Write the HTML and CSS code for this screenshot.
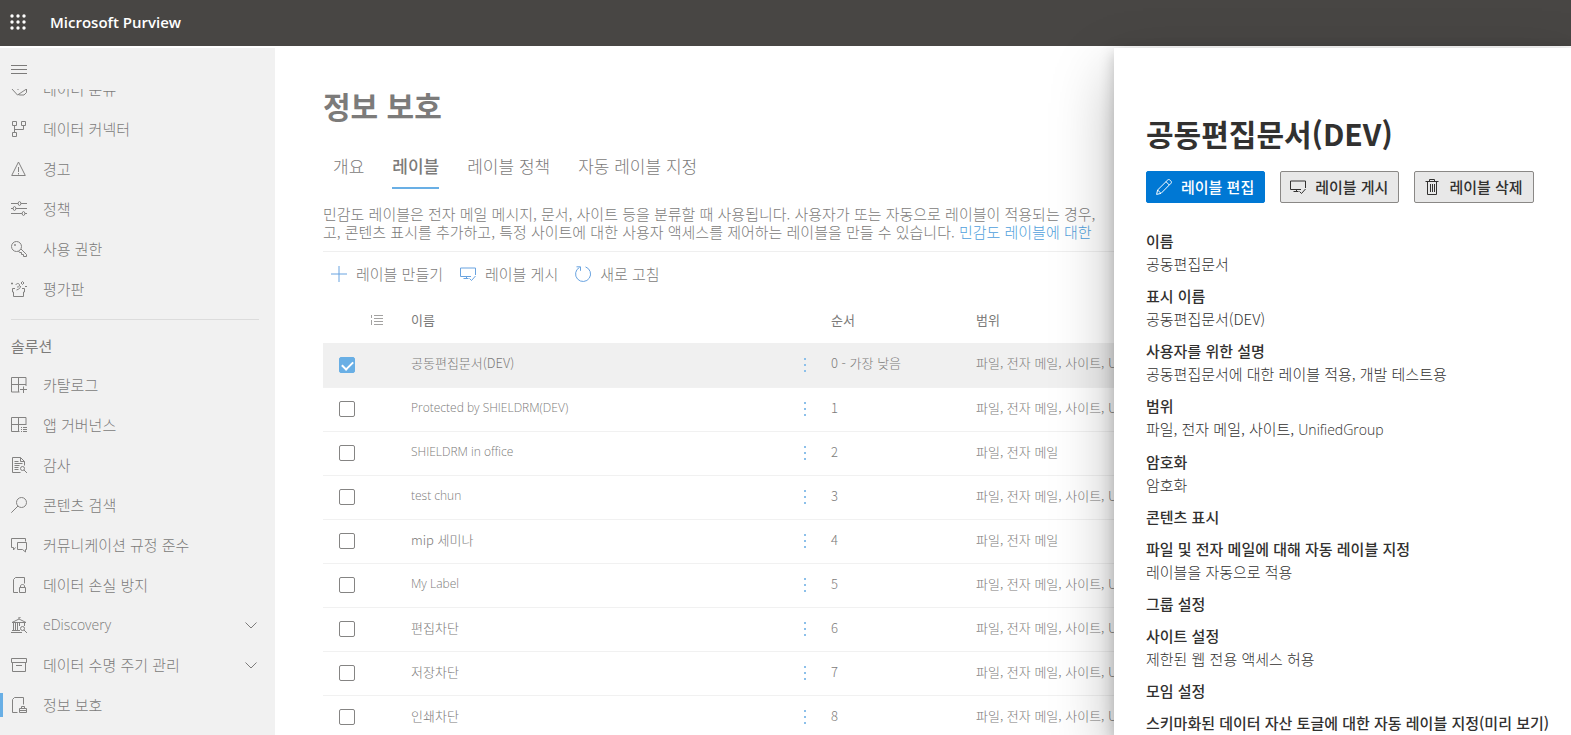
FILE: index.html
```html
<!DOCTYPE html>
<html lang="ko">
<head>
<meta charset="utf-8">
<title>정보 보호 - Microsoft Purview</title>
<link rel="stylesheet" href="styles.css">
</head>
<body>
<svg class="sprite" aria-hidden="true">
  <symbol id="i-publish" viewBox="0 0 16 16"><path d="M11 10.500H.5v-8.500h15v7M3.500 12.500h5M6.500 10.500v2M9.500 12.500l2 2 4-4.500"/></symbol>
  <symbol id="i-chevron" viewBox="0 0 12 12"><path d="M.5 3.500 6 9l5.500-5.500"/></symbol>
  <symbol id="i-list" viewBox="0 0 12 12"><path d="M3 1.500h9M3 4.500h9M3 7.500h9M3 10.500h9M.5 1v3M.5 6v5"/></symbol>
</svg>
<header class="topbar">
  <button class="waffle" type="button" aria-label="앱 시작 관리자">
    <svg viewBox="0 0 16 16"><g fill="#fff"><circle cx="2" cy="2" r="1.700"/><circle cx="8" cy="2" r="1.700"/><circle cx="14" cy="2" r="1.700"/><circle cx="2" cy="8" r="1.700"/><circle cx="8" cy="8" r="1.700"/><circle cx="14" cy="8" r="1.700"/><circle cx="2" cy="14" r="1.700"/><circle cx="8" cy="14" r="1.700"/><circle cx="14" cy="14" r="1.700"/></g></svg>
  </button>
  <span class="brand">Microsoft Purview</span>
</header>
<div class="shell">
  <nav class="sidebar">
    <button class="menu" type="button" aria-label="탐색 메뉴">
      <svg class="icon" viewBox="0 0 16 16"><path d="M0 3.500h16M0 7.500h16M0 11.500h16"/></svg>
    </button>
    <div class="nav-scroll">
      <ul class="nav-list nav-list-top">
        <li><a class="nav-item" href="#"><svg class="icon" viewBox="0 0 16 16"><path d="M.5 7.500 1 5l3-3h4l3 3M.5 7.500 6.500 14 15.500 8V3h-3L6.500 9M7 13.500l2 .5h4l2.500-2.500V7"/></svg><span>데이터 분류</span></a></li>
        <li><a class="nav-item" href="#"><svg class="icon" viewBox="0 0 16 16"><path d="M1.500.5h4v4h-4zM10.500.5h4v4h-4zM1.500 11.500h4v4h-4zM3.500 4.500v7M3.500 8.500h9v-4"/></svg><span>데이터 커넥터</span></a></li>
        <li><a class="nav-item" href="#"><svg class="icon" viewBox="0 0 16 16"><path d="M7.500 1 .7 14.500h13.600zM7.500 6v5M7.500 12v1.500"/></svg><span>경고</span></a></li>
        <li><a class="nav-item" href="#"><svg class="icon" viewBox="0 0 16 16"><path d="M0 2.500h7M10 2.500h6M0 7.500h2M5 7.500h11M0 12.500h11M14 12.500h2"/><ellipse cx="8.500" cy="2.500" rx="1.300" ry="2"/><ellipse cx="3.500" cy="7.500" rx="1.300" ry="2"/><ellipse cx="12.500" cy="12.500" rx="1.300" ry="2"/></svg><span>정책</span></a></li>
        <li><a class="nav-item" href="#"><svg class="icon" viewBox="0 0 16 16"><circle cx="5.500" cy="5.500" r="5"/><circle cx="4" cy="4" r=".6"/><path d="m10 8 5.500 5.500v2h-3v-2h-2v-2H8.500l-1-1.500"/></svg><span>사용 권한</span></a></li>
        <li><a class="nav-item" href="#"><svg class="icon" viewBox="0 0 16 16"><path d="M4 7.500H1.500V11h1v4.500h10V11h1V7.500H11M5.500 9c3-1 4-2 4-4M5 4c0-2 3.500-2 3.500 0S7 6 6 6M0 2.500h2M1 1.500v2M11.500 .5 13 2l-1.500 1.500L10 2zM14 5.500h2"/></svg><span>평가판</span></a></li>
      </ul>
      <hr class="nav-rule">
      <h2 class="nav-heading">솔루션</h2>
      <ul class="nav-list">
        <li><a class="nav-item" href="#"><svg class="icon" viewBox="0 0 16 16"><path d="M8.500 15H.5V.5h14.500v8.500M7.500.5V15M.5 7.500H15M12.500 9.500V16M9 12.500h7"/></svg><span>카탈로그</span></a></li>
        <li><a class="nav-item" href="#"><svg class="icon" viewBox="0 0 16 16"><path d="M8.500 14.500H.5V.5h14.500V8M7.500.5v14M.5 7.500H15M10 10.500h1M12 10.500h4M10 12.500h1M12 12.500h4M10 14.500h1M12 14.500h4"/></svg><span>앱 거버넌스</span></a></li>
        <li><a class="nav-item" href="#"><svg class="icon" viewBox="0 0 16 16"><path d="M9.500 15.500h-8V.5h8l4 4v4M9.500.5v4h4M3.500 4.500h4M3.500 6.500h8M3.500 8.500h5M3.500 10.500h4M3.500 12.500h4M13 13l3 3"/><circle cx="11.500" cy="11.500" r="2"/></svg><span>감사</span></a></li>
        <li><a class="nav-item" href="#"><svg class="icon" viewBox="0 0 16 16"><circle cx="10.500" cy="5.500" r="5"/><path d="M7 9 .3 15.700"/></svg><span>콘텐츠 검색</span></a></li>
        <li><a class="nav-item" href="#"><svg class="icon" viewBox="0 0 16 16"><path d="M4.500 10.500 2.500 13v-2.500H.5v-9h14v3M6.500 5.500h9v7h-1v2.500l-3-2.500h-5z"/></svg><span>커뮤니케이션 규정 준수</span></a></li>
        <li><a class="nav-item" href="#"><svg class="icon" viewBox="0 0 16 16"><path d="M7 15.500H2.500V2.500l2-2h9v6M8.500 10.500h6v5h-6zM9.500 10.500V9c0-2 4-2 4 0v1.500"/></svg><span>데이터 손실 방지</span></a></li>
        <li><a class="nav-item" href="#"><svg class="icon" viewBox="0 0 16 16"><path d="M1 5.500 8 2l7 3.500zM8 2V0h2M0 15.500h11M1 13.500h8M2.500 6v7M4.500 6v7M6.500 6v7M8.500 6v3M13.500 6v3M13 13l3 3"/><circle cx="11.500" cy="11.500" r="2"/></svg><span class="latin-nav">eDiscovery</span><svg class="chevron"><use href="#i-chevron"/></svg></a></li>
        <li><a class="nav-item" href="#"><svg class="icon" viewBox="0 0 16 16"><path d="M.5 1.500h15v4H.5zM1.500 5.500v9h13v-9M5 8.500h6"/></svg><span>데이터 수명 주기 관리</span><svg class="chevron"><use href="#i-chevron"/></svg></a></li>
        <li><a class="nav-item active" href="#" aria-current="page"><svg class="icon" viewBox="0 0 16 16"><path d="M6.500 15.500h-5v-13l2-2h9v7M8.500 11.500h7v4h-7zM10.500 11.500v-2h3v2M8.500 13.500h7"/></svg><span>정보 보호</span></a></li>
      </ul>
    </div>
  </nav>
  <main class="main">
    <h1 class="page-title">정보 보호</h1>
    <div class="tabs" role="tablist">
      <button class="tab" type="button" role="tab">개요</button>
      <button class="tab selected" type="button" role="tab" aria-selected="true">레이블</button>
      <button class="tab" type="button" role="tab">레이블 정책</button>
      <button class="tab" type="button" role="tab">자동 레이블 지정</button>
    </div>
    <p class="intro">민감도 레이블은 전자 메일 메시지, 문서, 사이트 등을 분류할 때 사용됩니다. 사용자가 또는 자동으로 레이블이 적용되는 경우,<br>고, 콘텐츠 표시를 추가하고, 특정 사이트에 대한 사용자 액세스를 제어하는 레이블을 만들 수 있습니다. <a href="#">민감도 레이블에 대한</a></p>
    <div class="commands">
      <button class="command" type="button"><svg class="icon" viewBox="0 0 16 16"><path d="M8 0v16M0 8h16"/></svg><span>레이블 만들기</span></button>
      <button class="command" type="button"><svg class="icon"><use href="#i-publish"/></svg><span>레이블 게시</span></button>
      <button class="command" type="button"><svg class="icon" viewBox="0 0 16 16"><path d="M10.500.9a7.500 7.500 0 1 1-6 .5M1.500.8h4v4"/></svg><span>새로 고침</span></button>
    </div>
    <table class="labels">
      <colgroup><col class="c-check"><col class="c-icon"><col><col class="c-more"><col class="c-order"><col class="c-scope"></colgroup>
      <thead><tr><th></th><th><svg class="list-icon"><use href="#i-list"/></svg></th><th>이름</th><th></th><th>순서</th><th>범위</th></tr></thead>
      <tbody>
        <tr class="picked"><td><input type="checkbox" checked aria-label="공동편집문서(DEV) 선택"></td><td></td><td>공동편집문서(DEV)</td><td><button class="more" type="button" aria-label="추가 작업"><i></i><i></i><i></i></button></td><td>0 - 가장 낮음</td><td>파일, 전자 메일, 사이트, UnifiedGroup</td></tr>
        <tr><td><input type="checkbox" aria-label="Protected by SHIELDRM(DEV) 선택"></td><td></td><td class="latin">Protected by SHIELDRM(DEV)</td><td><button class="more" type="button" aria-label="추가 작업"><i></i><i></i><i></i></button></td><td>1</td><td>파일, 전자 메일, 사이트, UnifiedGroup</td></tr>
        <tr><td><input type="checkbox" aria-label="SHIELDRM in office 선택"></td><td></td><td class="latin">SHIELDRM in office</td><td><button class="more" type="button" aria-label="추가 작업"><i></i><i></i><i></i></button></td><td>2</td><td>파일, 전자 메일</td></tr>
        <tr><td><input type="checkbox" aria-label="test chun 선택"></td><td></td><td class="latin">test chun</td><td><button class="more" type="button" aria-label="추가 작업"><i></i><i></i><i></i></button></td><td>3</td><td>파일, 전자 메일, 사이트, UnifiedGroup</td></tr>
        <tr><td><input type="checkbox" aria-label="mip 세미나 선택"></td><td></td><td>mip 세미나</td><td><button class="more" type="button" aria-label="추가 작업"><i></i><i></i><i></i></button></td><td>4</td><td>파일, 전자 메일</td></tr>
        <tr><td><input type="checkbox" aria-label="My Label 선택"></td><td></td><td class="latin">My Label</td><td><button class="more" type="button" aria-label="추가 작업"><i></i><i></i><i></i></button></td><td>5</td><td>파일, 전자 메일, 사이트, UnifiedGroup</td></tr>
        <tr><td><input type="checkbox" aria-label="편집차단 선택"></td><td></td><td>편집차단</td><td><button class="more" type="button" aria-label="추가 작업"><i></i><i></i><i></i></button></td><td>6</td><td>파일, 전자 메일, 사이트, UnifiedGroup</td></tr>
        <tr><td><input type="checkbox" aria-label="저장차단 선택"></td><td></td><td>저장차단</td><td><button class="more" type="button" aria-label="추가 작업"><i></i><i></i><i></i></button></td><td>7</td><td>파일, 전자 메일, 사이트, UnifiedGroup</td></tr>
        <tr><td><input type="checkbox" aria-label="인쇄차단 선택"></td><td></td><td>인쇄차단</td><td><button class="more" type="button" aria-label="추가 작업"><i></i><i></i><i></i></button></td><td>8</td><td>파일, 전자 메일, 사이트, UnifiedGroup</td></tr>
      </tbody>
    </table>
  </main>
  <aside class="panel">
    <h2 class="panel-title">공동편집문서(DEV)</h2>
    <div class="actions">
      <button class="action primary" type="button"><svg class="icon" viewBox="0 0 16 16"><path d="m.6 15.400 1-4.400L11.800.9c1.500-1.300 4.600 1.700 3.300 3.300L5 14.400zM10 2.700 13.300 6M1.600 11l3.400 3.400"/></svg><span>레이블 편집</span></button>
      <button class="action" type="button"><svg class="icon"><use href="#i-publish"/></svg><span>레이블 게시</span></button>
      <button class="action" type="button"><svg class="icon" viewBox="0 0 16 16"><path d="M1.500 2.500h13M5.500 2.500v-2h5v2M3.500 2.500v13h9v-13M6.500 5v8M8.500 5v8M10.500 5v8"/></svg><span>레이블 삭제</span></button>
    </div>
    <dl class="fields">
      <div><dt>이름</dt><dd>공동편집문서</dd></div>
      <div><dt>표시 이름</dt><dd>공동편집문서(DEV)</dd></div>
      <div><dt>사용자를 위한 설명</dt><dd>공동편집문서에 대한 레이블 적용, 개발 테스트용</dd></div>
      <div><dt>범위</dt><dd>파일, 전자 메일, 사이트, <span class="latin-value">UnifiedGroup</span></dd></div>
      <div><dt>암호화</dt><dd>암호화</dd></div>
      <div><dt>콘텐츠 표시</dt></div>
      <div><dt>파일 및 전자 메일에 대해 자동 레이블 지정</dt><dd>레이블을 자동으로 적용</dd></div>
      <div><dt>그룹 설정</dt></div>
      <div><dt>사이트 설정</dt><dd>제한된 웹 전용 액세스 허용</dd></div>
      <div><dt>모임 설정</dt></div>
      <div><dt>스키마화된 데이터 자산 토글에 대한 자동 레이블 지정(미리 보기)</dt></div>
    </dl>
  </aside>
</div>
</body>
</html>
```
FILE: styles.css
```css
* { box-sizing: border-box; }
html, body { height: 100%; }
body {
  margin: 0;
  display: flex;
  flex-direction: column;
  overflow: hidden;
  background: #fff;
  color: #7c7b7a;
  font: 300 15px/20px "Noto Sans CJK KR", "Noto Sans", sans-serif;
}
button {
  margin: 0;
  padding: 0;
  border: 0;
  background: none;
  color: inherit;
  font: inherit;
}
h1, h2, p, ul, dl, dd { margin: 0; padding: 0; }
ul { list-style: none; }
a { color: inherit; text-decoration: none; }
svg { display: block; flex: none; }
.sprite { position: absolute; width: 0; height: 0; }
.icon {
  width: 16px;
  height: 16px;
  fill: none;
  stroke: currentColor;
  stroke-width: 1;
}

.topbar {
  flex: none;
  display: flex;
  align-items: center;
  height: 46px;
  padding: 0 10px 2px;
  background: #484644;
}
.waffle svg { width: 16px; height: 16px; }
.brand {
  margin-left: 24px;
  color: #fff;
  font: 600 15px/20px "Open Sans", "Noto Sans", sans-serif;
}

.shell {
  position: relative;
  flex: 1;
  min-height: 0;
  display: flex;
  margin-top: 2px;
}

.sidebar {
  flex: none;
  display: flex;
  flex-direction: column;
  width: 275px;
  background: #f1f1f1;
}
.menu { padding: 14px 11px 11px; }
.nav-scroll { flex: 1; min-height: 0; overflow: hidden; }
.nav-list-top { margin-top: -20px; }
.nav-item {
  display: flex;
  align-items: center;
  gap: 16px;
  height: 40px;
  padding: 0 18px 0 11px;
}
.nav-item .icon { color: #838281; }
.nav-item.active { background: linear-gradient(#69afe5, #69afe5) 0 center / 3px 24px no-repeat; }
.latin-nav { font: 300 14px/20px "Open Sans", sans-serif; }
.chevron {
  width: 12px;
  height: 12px;
  margin-left: auto;
  fill: none;
  stroke: currentColor;
}
.nav-rule {
  height: 1px;
  margin: 10px 16px 16px 11px;
  border: 0;
  background: #dcdcdc;
}
.nav-heading {
  margin: 0 11px 9px;
  font-size: 15px;
  line-height: 20px;
  font-weight: 400;
}

.main { flex: 1; min-width: 0; padding: 36px 48px 0; }
.page-title { font-size: 30px; line-height: 42px; font-weight: 700; }
.tabs { display: flex; gap: 28px; padding: 19px 10px 0; font-size: 17px; }
.tab { height: 44px; border-bottom: 2px solid transparent; line-height: 42px; }
.tab.selected { border-color: #69afe5; font-weight: 500; }
.intro {
  margin-top: 16px;
  padding-bottom: 10px;
  border-bottom: 1px solid #efefef;
  line-height: 18px;
  white-space: nowrap;
}
.intro a { color: #4f9fdc; }
.commands { display: flex; gap: 17px; padding: 12px 8px; }
.command { display: flex; align-items: center; gap: 9px; }
.command .icon { color: #69a3e0; }

.labels {
  width: 100%;
  border-collapse: collapse;
  table-layout: fixed;
  font-size: 13px;
}
.c-check { width: 48px; }
.c-icon { width: 40px; }
.c-more { width: 40px; }
.c-order { width: 145px; }
.c-scope { width: 547px; }
.labels th { height: 47px; padding: 0; text-align: left; font-weight: 400; }
.labels td {
  height: 44px;
  padding: 0 0 3px;
  border-bottom: 1px solid #f1f1f1;
  white-space: nowrap;
}
.labels td:first-child, .labels td:nth-child(4) { padding: 0; }
.labels td.latin { font: 300 12px/20px "Open Sans", sans-serif; }
.picked { background: #f0f0f0; }
.list-icon { width: 12px; height: 12px; fill: none; stroke: #a3a2a1; }
.labels input {
  appearance: none;
  display: block;
  width: 16px;
  height: 16px;
  margin: 0 16px;
  border: 1px solid #858483;
  border-radius: 2px;
}
.labels input:checked { border-color: #69afe5; background: #69afe5; }
.labels input:checked::after {
  content: "";
  display: block;
  width: 9px;
  height: 5px;
  margin: 3px 2px;
  border: solid #fff;
  border-width: 0 0 2px 2px;
  transform: rotate(-45deg);
}
.more { display: grid; gap: 4px; padding: 0 13px; }
.more i { width: 2px; height: 2px; background: #8cc0ea; }

.panel {
  position: absolute;
  top: 0;
  right: 0;
  bottom: 0;
  width: 457px;
  padding: 64px 32px 0;
  overflow: hidden;
  background: #fff;
  box-shadow: 0 26px 58px rgba(0, 0, 0, .28), 0 5px 14px rgba(0, 0, 0, .22);
  color: #323130;
  white-space: nowrap;
}
.panel-title { font-size: 30px; line-height: 42px; font-weight: 700; }
.actions { display: flex; gap: 15px; margin: 17px 0 26px; }
.action {
  display: flex;
  align-items: center;
  gap: 9px;
  height: 32px;
  padding: 0 10px 0 9px;
  border: 1px solid #8a8886;
  border-radius: 2px;
  background: #e8e8e8;
  font-weight: 500;
}
.action.primary { border-color: #0078d4; background: #0078d4; color: #fff; }
.fields { display: grid; gap: 9px; line-height: 23px; }
.fields dt { font-weight: 500; }
.latin-value { font-family: "Open Sans", sans-serif; font-size: 14px; }
```
